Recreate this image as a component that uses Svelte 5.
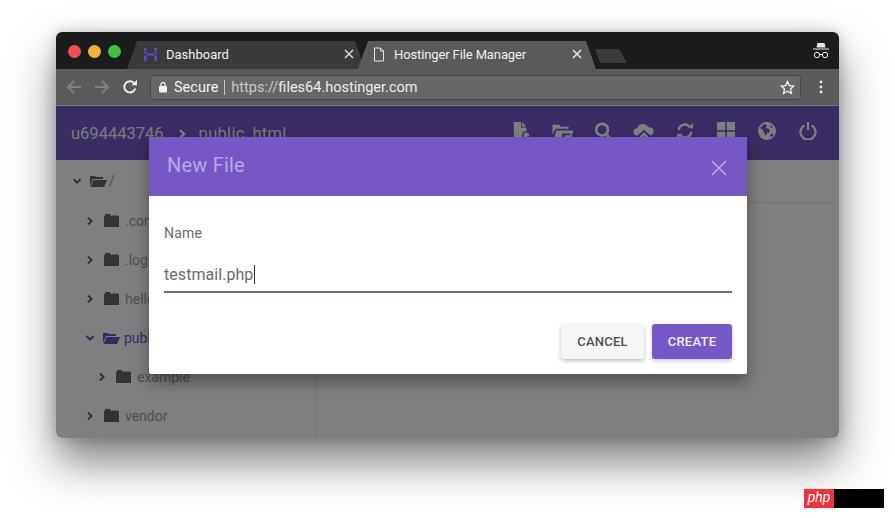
<script>
  const tree = [
    { name: '.config', depth: 0 },
    { name: '.logs', depth: 0 },
    { name: 'hello', depth: 0 },
    { name: 'public_html', depth: 0, open: true },
    { name: 'example', depth: 1 },
    { name: 'vendor', depth: 0 },
  ];
</script>

<div class="page">
  <div class="window">
    <div class="tabbar">
      <div class="lights">
        <span class="light red"></span>
        <span class="light yellow"></span>
        <span class="light green"></span>
      </div>
      <div class="tab dark">
        <svg class="favicon" viewBox="0 0 16 16" width="15" height="15">
          <path d="M1 1h3v3H1zM1 5h3v2H1zM12 1h3v3h-3zM12 5h3v2h-3zM1 9h3v6H1zM12 9h3v6h-3zM4 7h8v2H4z" fill="#5b4bc4" />
        </svg>
        <span class="tab-title">Dashboard</span>
        <svg class="tab-x" viewBox="0 0 10 10" width="10" height="10">
          <path d="M1 1l8 8M9 1l-8 8" stroke="#d8d8d8" stroke-width="1.6" />
        </svg>
      </div>
      <div class="tab light-tab">
        <svg class="favicon" viewBox="0 0 12 15" width="12" height="15">
          <path d="M1.5 1h6l3 3v10h-9zM7.500 1v3h3" fill="none" stroke="#e4e4e4" stroke-width="1" />
        </svg>
        <span class="tab-title">Hostinger File Manager</span>
        <svg class="tab-x" viewBox="0 0 10 10" width="10" height="10">
          <path d="M1 1l8 8M9 1l-8 8" stroke="#e4e4e4" stroke-width="1.6" />
        </svg>
      </div>
      <div class="newtab"></div>
      <svg class="incognito" viewBox="0 0 18 18" width="18" height="18">
        <path d="M5.500 1h7l1 4.500h-9z" fill="#e8e8e8" />
        <path d="M1 6.500h16v1H1z" fill="#e8e8e8" />
        <circle cx="5" cy="13" r="2.700" fill="none" stroke="#e8e8e8" stroke-width="1" />
        <circle cx="13" cy="13" r="2.700" fill="none" stroke="#e8e8e8" stroke-width="1" />
        <path d="M7.700 12.500h2.600" stroke="#e8e8e8" stroke-width="1" />
      </svg>
    </div>

    <div class="toolbar">
      <svg class="nav" viewBox="0 0 16 16" width="16" height="16">
        <path d="M15 8H2M8 2L2 8l6 6" fill="none" stroke="#808080" stroke-width="1.800" />
      </svg>
      <svg class="nav" viewBox="0 0 16 16" width="16" height="16">
        <path d="M1 8h13M8 2l6 6-6 6" fill="none" stroke="#808080" stroke-width="1.800" />
      </svg>
      <svg class="nav" viewBox="0 0 16 16" width="16" height="16">
        <path d="M13.300 9.500A5.600 5.600 0 1 1 12 4" fill="none" stroke="#ececec" stroke-width="2" />
        <path d="M9.500 6.200H15V.8z" fill="#ececec" />
      </svg>
      <div class="omnibox">
        <svg viewBox="0 0 10 12" width="10" height="12">
          <rect x="1" y="5" width="8" height="6.500" rx="1" fill="#f0f0f0" />
          <path d="M3 5.500V3.500a2 2 0 0 1 4 0v2" fill="none" stroke="#f0f0f0" stroke-width="1.300" />
        </svg>
        <span class="secure">Secure</span>
        <span class="omni-sep"></span>
        <span class="url"><span class="scheme">https://</span>files64.hostinger.com</span>
        <svg class="star" viewBox="0 0 16 16" width="15" height="15">
          <path d="M8 1.500l2 4.400 4.700.5-3.500 3.200 1 4.700L8 11.900l-4.200 2.400 1-4.700L1.300 6.400 6 5.900z" fill="none" stroke="#efefef" stroke-width="1.400" />
        </svg>
      </div>
      <svg class="dots" viewBox="0 0 4 14" width="4" height="14">
        <circle cx="2" cy="2" r="1.400" fill="#e4e4e4" />
        <circle cx="2" cy="7" r="1.400" fill="#e4e4e4" />
        <circle cx="2" cy="12" r="1.400" fill="#e4e4e4" />
      </svg>
    </div>

    <div class="app">
      <header class="appbar">
        <div class="crumbs">
          <span>u694443746</span>
          <svg viewBox="0 0 8 10" width="8" height="10"><path d="M2 1l4 4-4 4" fill="none" stroke="#fff" stroke-width="2.400" /></svg>
          <span>public_html</span>
        </div>
        <div class="actions">
          <svg viewBox="0 0 18 20" width="16" height="18"><path d="M1 0h8v6h6v4l-4 1-1 5 2 4H1zM10 0l5 5h-5z" fill="#fff" /><path d="M12 12h3v-1h1v2h2v3h-2v2h-4z" fill="#fff" /></svg>
          <svg viewBox="0 0 24 20" width="23" height="19"><path d="M2 3h7l2 2h8v2H5l-3 7z" fill="#fff" /><path d="M6 9h18l-3 10h-6v-5h6v-2H12v7H3z" fill="#fff" /></svg>
          <svg viewBox="0 0 20 20" width="18" height="18"><circle cx="9" cy="8.500" r="6.500" fill="none" stroke="#fff" stroke-width="3" /><path d="M13 13l5 6" stroke="#fff" stroke-width="3.500" /></svg>
          <svg viewBox="0 0 24 18" width="20" height="15"><path d="M4 14a4.500 4.500 0 0 1 0-9 7 7 0 0 1 13-1 5 5 0 0 1 3 10l-8-7z" fill="#fff" /><path d="M12 10l6 6-2 2-4-4-4 4-2-2z" fill="#fff" /></svg>
          <svg viewBox="0 0 20 20" width="18" height="18"><path d="M3 9a7 7 0 0 1 12-4M17 11a7 7 0 0 1-12 4" fill="none" stroke="#fff" stroke-width="2.600" /><path d="M13 7h6V1zM7 13H1v6z" fill="#fff" /></svg>
          <svg viewBox="0 0 18 18" width="18" height="18"><path d="M0 0h8.200v8.200H0zM9.800 0H18v8.200H9.800zM0 9.800h8.200V18H0zM9.800 9.800H18V18H9.800z" fill="#fff" /></svg>
          <svg viewBox="0 0 18 18" width="18" height="18"><circle cx="9" cy="9" r="9" fill="#fff" /><path d="M2 6l4-4 3 1-1 3 3 1 1 3-3 1-1 3-2-3-1-3zM12 3l3 2-2 1zM12 13l3-2 0 3-2 1z" fill="#7558c9" /></svg>
          <svg viewBox="0 0 18 18" width="18" height="18"><path d="M5.500 3.500a7.500 7.500 0 1 0 7 0" fill="none" stroke="#fff" stroke-width="2.200" /><path d="M9 0v8" stroke="#fff" stroke-width="2.200" /></svg>
        </div>
      </header>

      <div class="workspace">
        <aside class="sidebar">
          <div class="row root">
            <svg class="chev" viewBox="0 0 10 10" width="10" height="10"><path d="M1.500 3l3.500 3.500L8.500 3" fill="none" stroke="#666" stroke-width="2" /></svg>
            <svg class="open-folder" viewBox="0 0 18 14" width="18" height="14"><path d="M1 2h5l1 1h7v2H4l-3 7z" fill="#666" /><path d="M4.500 6H18l-3 7H1.500z" fill="#666" /></svg>
            <span>/</span>
          </div>
          {#each tree as item}
            <div class="row" class:active={item.open} class:nested={item.depth > 0}>
              {#if item.open}
                <svg class="chev" viewBox="0 0 10 10" width="10" height="10"><path d="M1.500 3l3.500 3.500L8.500 3" fill="none" stroke="#6a52d0" stroke-width="2" /></svg>
                <svg class="open-folder" viewBox="0 0 18 14" width="18" height="14"><path d="M1 2h5l1 1h7v2H4l-3 7z" fill="#6a52d0" /><path d="M4.500 6H18l-3 7H1.500z" fill="#6a52d0" /></svg>
              {:else}
                <svg class="chev" viewBox="0 0 10 10" width="10" height="10"><path d="M3 1.500L6.500 5 3 8.500" fill="none" stroke="#666" stroke-width="2" /></svg>
                <svg class="folder" viewBox="0 0 15 13" width="15" height="13"><path d="M0 2h1V0h5v1.500h8V2h1v11H0z" fill="#666" /></svg>
              {/if}
              <span class="row-name">{item.name}</span>
            </div>
          {/each}
        </aside>
        <main class="pane">
          <div class="pane-head"></div>
        </main>
      </div>

      <div class="scrim"></div>

      <div class="modal">
        <div class="modal-head">
          <span class="modal-title">New File</span>
          <svg viewBox="0 0 16 16" width="16" height="16"><path d="M1 1l14 14M15 1L1 15" stroke="#bba9ea" stroke-width="1.600" /></svg>
        </div>
        <div class="modal-body">
          <div class="label">Name</div>
          <div class="input"><span>testmail.php</span><i class="caret"></i></div>
          <div class="buttons">
            <button class="btn cancel">CANCEL</button>
            <button class="btn create">CREATE</button>
          </div>
        </div>
      </div>
    </div>
  </div>

  <div class="stamp"><span class="stamp-php">php</span></div>
</div>

<style>
  :global(body) {
    margin: 0;
    background: #fff;
  }

  .page {
    position: relative;
    width: 895px;
    height: 518px;
    padding: 32px 0 0 56px;
    box-sizing: border-box;
    overflow: hidden;
    font-family: Roboto, "Liberation Sans", sans-serif;
  }

  .window {
    position: relative;
    width: 783px;
    height: 406px;
    border-radius: 6px;
    overflow: hidden;
    display: flex;
    flex-direction: column;
  }

  .page::before {
    content: '';
    position: absolute;
    left: 56px;
    top: 32px;
    width: 783px;
    height: 406px;
    border-radius: 6px;
    box-shadow: 0 24px 44px rgba(0, 0, 0, 0.5), 0 0 14px rgba(0, 0, 0, 0.2);
  }

  .tabbar {
    position: relative;
    height: 37px;
    background: #1b1c1e;
    display: flex;
    align-items: flex-end;
    padding-left: 12px;
    flex: none;
  }

  .lights {
    display: flex;
    gap: 7px;
    align-self: flex-start;
    margin-top: 13px;
    width: 60px;
    flex: none;
  }

  .light {
    width: 13px;
    height: 13px;
    border-radius: 50%;
  }

  .red { background: #f1504c; }
  .yellow { background: #f4b133; }
  .green { background: #3fc03f; }

  .tab {
    height: 28px;
    width: 238px;
    display: flex;
    align-items: center;
    flex: none;
    color: #eee;
    font-size: 13px;
    box-sizing: border-box;
    padding: 0 11px 2px 16px;
    clip-path: polygon(0 100%, 10px 0, 228px 0, 238px 100%);
  }

  .tab.dark {
    background: #3b3b3c;
    margin-left: -1px;
  }

  .light-tab {
    background: #5a5a5a;
    margin-left: -7px;
    padding-left: 15px;
    padding-right: 14px;
  }

  .tab-title {
    margin-left: 8px;
    flex: 1;
    white-space: nowrap;
  }

  .light-tab .tab-title {
    margin-left: 9px;
    letter-spacing: -0.12px;
  }

  .newtab {
    width: 32px;
    height: 14px;
    margin: 0 0 6px -1px;
    background: #3b3b3c;
    clip-path: polygon(0 0, 24px 0, 32px 100%, 5px 100%);
  }

  .incognito {
    margin: 0 9px 9px auto;
  }

  .toolbar {
    height: 37px;
    background: #5a5a5a;
    border-bottom: 1px solid #7d7a80;
    box-sizing: border-box;
    display: flex;
    align-items: center;
    padding: 0 0 0 10px;
    gap: 12px;
    flex: none;
  }

  .omnibox {
    width: 651px;
    height: 25px;
    box-sizing: border-box;
    background: #676767;
    border: 1px solid #474747;
    border-radius: 3px;
    display: flex;
    align-items: center;
    padding: 0 5px 0 7px;
    color: #ececec;
    font-size: 14.500px;
    flex: none;
  }

  .secure {
    margin-left: 6px;
    color: #f2f2f2;
  }

  .omni-sep {
    width: 1px;
    height: 15px;
    background: #c8c8c8;
    margin: 0 6px;
  }

  .scheme {
    color: #c9c9c9;
  }

  .star {
    margin-left: auto;
  }

  .dots {
    margin-left: 6px;
  }

  .app {
    position: relative;
    flex: 1;
    display: flex;
    flex-direction: column;
    min-height: 0;
  }

  .appbar {
    height: 54px;
    background: #7558c9;
    display: flex;
    align-items: center;
    justify-content: space-between;
    padding: 0 19px 0 15px;
    flex: none;
  }

  .crumbs {
    display: flex;
    align-items: center;
    gap: 14px;
    color: #f4f4f4;
    font-size: 16.500px;
    margin-top: 1px;
  }

  .crumbs span:last-child {
    margin-left: -1px;
    letter-spacing: 0.3px;
  }

  .actions {
    display: flex;
    align-items: center;
    gap: 17px;
    margin-top: -4px;
  }

  .actions svg {
    width: 24px;
  }

  .workspace {
    flex: 1;
    display: flex;
    background: #fff;
    min-height: 0;
  }

  .sidebar {
    width: 261px;
    flex: none;
    border-right: 1px solid #eee;
    box-sizing: border-box;
    padding-top: 1px;
  }

  .row {
    height: 39px;
    display: flex;
    align-items: center;
    padding-left: 29px;
    font-size: 14px;
    color: #a0a0a0;
    white-space: nowrap;
  }

  .row.root {
    padding-left: 16px;
    height: 40px;
  }

  .row.nested {
    padding-left: 41px;
  }

  .row.active {
    color: #7558c9;
    padding-left: 29px;
  }

  .chev {
    flex: none;
  }

  .folder {
    margin-left: 9px;
    flex: none;
  }

  .open-folder {
    margin-left: 7px;
    margin-right: 2px;
    flex: none;
  }

  .row-name {
    margin-left: 6px;
  }

  .active .row-name {
    margin-left: 2px;
  }

  .pane {
    flex: 1;
    margin-right: 4px;
    border-right: 1px solid #eee;
  }

  .pane-head {
    height: 42px;
    border-bottom: 1px solid #e6e6e6;
  }

  .scrim {
    position: absolute;
    inset: 0;
    background: rgba(0, 0, 0, 0.5);
  }

  .modal {
    position: absolute;
    left: 93px;
    top: 31px;
    width: 598px;
    height: 237px;
    background: #fff;
    border-radius: 2px;
    box-shadow: 0 8px 16px rgba(0, 0, 0, 0.38);
    overflow: hidden;
  }

  .modal-head {
    height: 59px;
    background: #7558c6;
    display: flex;
    align-items: center;
    justify-content: space-between;
    padding: 0 20px 0 18px;
  }

  .modal-title {
    color: #b8a6ea;
    font-size: 20px;
    letter-spacing: 0.2px;
    margin-top: -3px;
  }

  .modal-head svg {
    margin-top: 3px;
  }

  .modal-body {
    padding: 29px 15px 0;
  }

  .label {
    font-size: 14px;
    line-height: 16px;
    color: #6a6a6a;
    letter-spacing: 0.2px;
  }

  .input {
    margin-top: 17px;
    height: 33px;
    box-sizing: content-box;
    border-bottom: 2px solid #7360b4;
    font-size: 16px;
    color: #6a6a6a;
    display: flex;
    align-items: center;
    letter-spacing: 0.05px;
  }

  .caret {
    width: 1px;
    height: 19px;
    background: #333;
    margin-left: 1px;
  }

  .buttons {
    display: flex;
    justify-content: flex-end;
    gap: 8px;
    margin-top: 31px;
  }

  .btn {
    height: 35px;
    border: none;
    border-radius: 3px;
    font-family: inherit;
    font-size: 13px;
    font-weight: 500;
    letter-spacing: 0.25px;
    padding: 0;
  }

  .cancel {
    width: 83px;
    background: #f6f6f6;
    color: #4f4f4f;
    box-shadow: 0 2px 4px rgba(0, 0, 0, 0.25);
  }

  .create {
    width: 80px;
    background: #7558c6;
    color: #f0ecfa;
    box-shadow: 0 2px 4px rgba(117, 88, 198, 0.35);
  }

  .stamp {
    position: absolute;
    left: 804px;
    top: 489px;
    width: 80px;
    height: 19px;
    background: #000;
  }

  .stamp-php {
    display: block;
    width: 30px;
    height: 19px;
    background: #f0323a;
    color: #fff;
    font-size: 14px;
    font-style: italic;
    line-height: 17px;
    text-align: center;
  }
</style>
